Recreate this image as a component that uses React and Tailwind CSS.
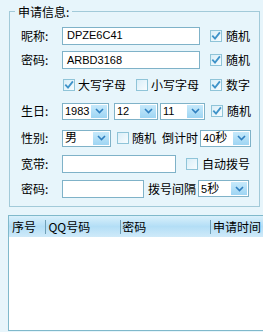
import React from "react";

const CJK = "font-['Noto_Sans_CJK_SC',sans-serif]";
const MIX = "font-['Liberation_Sans','Noto_Sans_CJK_SC',sans-serif]";

function Check({ checked }) {
  return (
    <span className="w-[12px] h-[12px] border border-[#8fc4d8] bg-gradient-to-br from-[#d9eef8] to-[#f7fcfe] flex items-center justify-center shrink-0">
      {checked && (
        <svg width="10" height="10" viewBox="0 0 10 10">
          <path d="M1.3 4.6 L4 7.6 L8.9 1.4" fill="none" stroke="#3f93c9" strokeWidth="1.8" />
        </svg>
      )}
    </span>
  );
}

function Chevron() {
  return (
    <span className="w-[16px] h-[13px] mr-[1px] bg-gradient-to-b from-[#c6e9fb] to-[#9ed5f3] flex items-center justify-center shrink-0">
      <svg width="9" height="6" viewBox="0 0 9 6">
        <path d="M1 1 L4.5 4.5 L8 1" fill="none" stroke="#2f7fbf" strokeWidth="1.6" />
      </svg>
    </span>
  );
}

function Sel({ className, children }) {
  return (
    <div className={"h-[17px] border border-[#7fb2c8] bg-white flex items-center justify-between shrink-0 " + className}>
      <span className={"pl-[2px] text-[11px] leading-none text-black " + MIX}>{children}</span>
      <Chevron />
    </div>
  );
}

function Input({ className, children }) {
  return (
    <div className={"h-[18px] border border-[#7fb2c8] bg-white flex items-center shrink-0 " + className}>
      <span className={"pl-[4px] text-[11px] leading-none text-black " + MIX}>{children}</span>
    </div>
  );
}

function Label({ children }) {
  return <span className={"w-[41px] shrink-0 text-[12px] leading-none text-black " + CJK}>{children}</span>;
}

function T({ className = "", children }) {
  return <span className={"text-[12px] leading-none text-black whitespace-nowrap " + CJK + " " + className}>{children}</span>;
}

export default function App() {
  return (
    <div className="w-[263px] h-[332px] bg-[#e7f5fb] overflow-hidden">
      <fieldset className="ml-[9px] w-[251px] border border-[#a2cad9] pb-[5px]">
        <legend className={"ml-[5px] px-[3px] text-[12px] leading-[23px] text-black " + CJK}>申请信息:</legend>

        <div className="flex items-center h-[25px] pl-[11px]">
          <Label>昵称:</Label>
          <Input className="w-[138px]">DPZE6C41</Input>
          <span className="ml-[10px]"><Check checked /></span>
          <T className="ml-[4px]">随机</T>
        </div>

        <div className="flex items-center h-[24px] pl-[11px]">
          <Label>密码:</Label>
          <Input className="w-[138px]">ARBD3168</Input>
          <span className="ml-[10px]"><Check checked /></span>
          <T className="ml-[4px]">随机</T>
        </div>

        <div className="flex items-center h-[26px] pl-[53px]">
          <div className="w-[73px] flex items-center">
            <Check checked />
            <T className="ml-[3px]">大写字母</T>
          </div>
          <div className="w-[74px] flex items-center">
            <Check />
            <T className="ml-[3px]">小写字母</T>
          </div>
          <div className="flex items-center">
            <Check checked />
            <T className="ml-[4px]">数字</T>
          </div>
        </div>

        <div className="flex items-center h-[26px] pl-[11px]">
          <Label>生日:</Label>
          <Sel className="w-[47px]">1983</Sel>
          <Sel className="w-[44px] ml-[5px]">12</Sel>
          <Sel className="w-[45px] ml-[2px]">11</Sel>
          <span className="ml-[6px]"><Check checked /></span>
          <T className="ml-[4px]">随机</T>
        </div>

        <div className="flex items-center h-[28px] pl-[11px]">
          <Label>性别:</Label>
          <Sel className="w-[49px]"><span className="text-[12px]">男</span></Sel>
          <span className="ml-[6px]"><Check /></span>
          <T className="ml-[3px]">随机</T>
          <T className="ml-[6px]">倒计时</T>
          <Sel className="w-[51px] ml-[2px]">40<span className="text-[12px]">秒</span></Sel>
        </div>

        <div className="flex items-center h-[24px] pl-[11px]">
          <Label>宽带:</Label>
          <Input className="w-[114px]"></Input>
          <span className="ml-[10px]"><Check /></span>
          <T className="ml-[4px]">自动拨号</T>
        </div>

        <div className="flex items-center h-[25px] pl-[11px]">
          <Label>密码:</Label>
          <Input className="w-[82px]"></Input>
          <T className="ml-[4px]">拨号间隔</T>
          <Sel className="w-[51px] ml-[2px]">5<span className="text-[12px]">秒</span></Sel>
        </div>
      </fieldset>

      <div className="mt-[8px] ml-[8px] w-[262px] h-[116px] border border-[#80b9cb] bg-white">
        <div className="h-[21px] bg-gradient-to-b from-[#d9f0fb] via-[#b3def6] to-[#cfeaf9] flex items-center">
          <div className="w-[37px] h-[14px] flex items-center pl-[3px]">
            <T>序号</T>
          </div>
          <div className="w-[76px] h-[14px] flex items-center pl-[2px] border-l border-[#6f9fb6]">
            <T>QQ号码</T>
          </div>
          <div className="w-[91px] h-[14px] flex items-center pl-[1px] border-l border-[#6f9fb6]">
            <T>密码</T>
          </div>
          <div className="w-[60px] h-[14px] flex items-center pl-[2px] border-l border-[#6f9fb6]">
            <T>申请时间</T>
          </div>
        </div>
      </div>
    </div>
  );
}
